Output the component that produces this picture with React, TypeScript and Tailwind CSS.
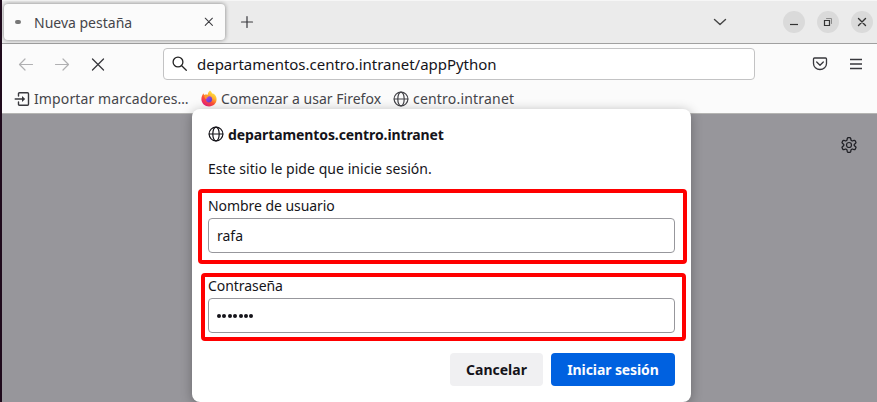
import type { ReactNode } from "react";

function Icon({ children, className = "", size = 16 }: { children: ReactNode; className?: string; size?: number }) {
  return (
    <svg width={size} height={size} viewBox="0 0 16 16" fill="none" stroke="currentColor" strokeWidth="1.2" strokeLinecap="round" strokeLinejoin="round" className={`block shrink-0 ${className}`}>
      {children}
    </svg>
  );
}

function Globe({ className = "" }: { className?: string }) {
  return (
    <Icon className={className}>
      <circle cx="8" cy="8" r="6.9" />
      <ellipse cx="8" cy="8" rx="3.2" ry="6.9" />
      <path d="M1.2 8h13.6" />
    </Icon>
  );
}

function Firefox() {
  return (
    <svg width="16" height="17" viewBox="0 0 16 17" className="block shrink-0">
      <defs>
        <linearGradient id="flame" x1="0.85" y1="0.05" x2="0.25" y2="0.95">
          <stop offset="0" stopColor="#fff44f" />
          <stop offset=".35" stopColor="#ffb52e" />
          <stop offset=".65" stopColor="#ff5036" />
          <stop offset="1" stopColor="#e81f7b" />
        </linearGradient>
        <linearGradient id="orb" x1="0" y1="0" x2="1" y2="1">
          <stop offset="0" stopColor="#a84be8" />
          <stop offset="1" stopColor="#5b38c9" />
        </linearGradient>
      </defs>
      <path d="M9 .4c1.2 1.1 1.8 2 2.2 3.2.9-.2 1.6.1 2.1.7 1.4 1.4 2.3 3 2.3 5 0 4.2-3.3 7.1-7.5 7.1S.4 13.3.4 9.2c0-2.5.9-4.3 2.1-6 .1.8.3 1.3.8 1.7 1.1-.5 2.4-.4 3.500-.1C6.800 3 7.500 1.500 9 .4Z" fill="url(#flame)" />
      <circle cx="8" cy="9.3" r="3.1" fill="url(#orb)" />
      <path d="M3.300 5.300c1.800-.6 3.500-.1 4.300.9-.3 1-1.500 1.100-1.900 1.400-.4.4-.2 1 .1 1.400-1.300.2-2.400-.7-2.500-3.700Z" fill="#ff9a2d" />
    </svg>
  );
}

function WindowButton({ children }: { children: ReactNode }) {
  return <div className="flex size-[22px] items-center justify-center rounded-full bg-[#dadada] text-[#333]">{children}</div>;
}

function TabBar() {
  return (
    <div className="flex h-11 shrink-0 items-center border-b border-[#a0a0a0] border-t border-t-[#f6f6f6] bg-[#ebebeb] pl-0.5 pr-1">
      <div className="flex h-9 w-[221px] items-center rounded bg-[#fbfbfb] pl-[11px] pr-2.5 text-[#45454a] shadow-[0_0_4px_rgba(0,0,0,.45)]">
        <div className="h-1 w-1.5 rounded-full bg-[#777]" />
        <span className="ml-[13px] text-[14px]">Nueva pestaña</span>
        <Icon size={14} className="ml-auto -mr-px text-[#3c3c40]"><path d="m3.700 3.700 8.200 8.200m0-8.200-8.200 8.200" /></Icon>
      </div>
      <Icon className="ml-[14px] text-[#38383d]"><path d="M8 2.500v11M2.500 8h11" /></Icon>
      <Icon className="ml-auto mr-[55px] text-[#444]"><path d="m2.500 5.500 5.500 5 5.500-5" strokeWidth="1.400" /></Icon>
      <div className="flex gap-3">
        <WindowButton><Icon><path d="M4 10.500h8" strokeLinecap="butt" /></Icon></WindowButton>
        <WindowButton>
          <Icon><path d="M4.500 6.500h5v5h-5Z" strokeLinejoin="miter" /><path d="M6.500 4.500h5v5" stroke="#8b8b8b" strokeWidth="1" strokeLinejoin="miter" /></Icon>
        </WindowButton>
        <WindowButton><Icon><path d="m4.500 4.500 7 7m0-7-7 7" strokeWidth="1.400" /></Icon></WindowButton>
      </div>
    </div>
  );
}

function Toolbar() {
  return (
    <div className="flex h-10 shrink-0 items-center pl-4 pr-[13px] text-[#38383d]">
      <Icon className="text-[#b0b0b2]"><path d="M14.500 8.500h-13M7 3 1.500 8.500 7 14" /></Icon>
      <Icon className="ml-5 text-[#b0b0b2]"><path d="M1.500 8.500h13M9 3l5.500 5.500L9 14" /></Icon>
      <Icon className="ml-5"><path d="m2.500 3 11 11m0-11-11 11" strokeWidth="1.300" /></Icon>
      <div className="ml-[57px] flex h-8 w-[592px] items-center rounded border border-[#c3c3c4] bg-white pl-2">
        <Icon className="text-[#222]"><circle cx="6" cy="6" r="4.900" strokeWidth="1.300" /><path d="m9.700 9.700 4.600 4.600" strokeWidth="1.300" /></Icon>
        <span className="ml-[9px] text-[15px] tracking-[-0.02px] text-[#15141a]">departamentos.centro.intranet/appPython</span>
      </div>
      <Icon className="ml-auto"><path d="M2.500 2h11c.6 0 1 .4 1 1v4.500a6.500 6 0 0 1-13 0V3c0-.6.400-1 1-1Z" strokeWidth="1.300" /><path d="m4.700 6 3.300 3.200L11.300 6" strokeWidth="1.300" /></Icon>
      <Icon className="ml-5"><path d="M2 3.500h12M2 8h12M2 12.500h12" strokeLinecap="butt" strokeWidth="1.300" /></Icon>
    </div>
  );
}

function Bookmarks() {
  return (
    <div className="flex h-[29px] shrink-0 items-center pl-3 text-[14px] text-[#45454a]">
      <Icon className="text-[#38383d]"><path d="M4.500 5V2.800c0-.7.300-1 1-1h8c.7 0 1 .3 1 1v10.400c0 .7-.3 1-1 1h-8c-.7 0-1-.3-1-1V11" strokeWidth="1.400" /><path d="M1.200 8H9" strokeWidth="1.400" /><path d="m8 5 3.200 3L8 11Z" fill="currentColor" stroke="none" /></Icon>
      <span className="ml-1 w-[167px] tracking-[0.12px]">Importar marcadores…</span>
      <Firefox />
      <span className="ml-1 w-[172px] tracking-[0.02px]">Comenzar a usar Firefox</span>
      <Globe />
      <span className="ml-1 tracking-[0.2px]">centro.intranet</span>
    </div>
  );
}

function Field({ label, children }: { label: string; children: ReactNode }) {
  return (
    <div className="h-20">
      <div className="h-[22px] text-[14px] leading-[22px] tracking-[-0.06px]">{label}</div>
      <div className="mt-px flex h-[35px] items-center rounded border border-[#97979c] bg-white pl-2 text-[14px]">{children}</div>
    </div>
  );
}

function LoginDialog() {
  return (
    <div className="absolute left-[192px] top-[109px] h-[293px] w-[499px] rounded-lg bg-white px-4 text-[14px] text-[#15141a] shadow-[0_2px_12px_rgba(0,0,0,.3)]">
      <div className="mt-4 flex h-[18px] items-center">
        <Globe />
        <span className="ml-1 font-bold tracking-[-0.1px]">departamentos.centro.intranet</span>
      </div>
      <p className="mt-[15px] h-[22px] leading-[22px] tracking-[0.05px]">Este sitio le pide que inicie sesión.</p>
      <div className="mt-[15px]">
        <Field label="Nombre de usuario">rafa</Field>
        <Field label="Contraseña">
          <div className="flex gap-[1.4px]" aria-label="Contraseña">
            {Array.from({ length: 7 }, (_, i) => <i key={i} className="size-1 rounded-full bg-[#15141a]" />)}
          </div>
        </Field>
      </div>
      <div className="-mt-2 flex justify-end gap-2 pt-[6px] font-bold">
        <button className="h-[33px] w-[93px] rounded bg-[#f0f0f2]">Cancelar</button>
        <button className="h-[33px] w-[124px] rounded bg-[#0061e0] tracking-[-0.1px] text-[#fbfbfe]">Iniciar sesión</button>
      </div>
    </div>
  );
}

export default function App() {
  return (
    <div className="relative flex h-[402px] w-[877px] flex-col overflow-hidden border-l-2 border-[#1f0a1c] bg-[#fbfbfb] font-['Noto_Sans','Open_Sans',sans-serif]">
      <TabBar />
      <Toolbar />
      <Bookmarks />
      <main className="flex flex-1 justify-end border-t border-[#b5b5b3] bg-[#97969b] pr-5 pt-[23px] text-[#202026]">
        <Icon><circle cx="8" cy="8" r="2.500" strokeWidth="1.200" /><path d="M6.300 1.500Q6.500.7 7.300.7h1.400q.8 0 1 .8l.4 1.800 1.100.7 1.900-.6q.7-.2 1.100.5l.6 1.100q.4.7-.2 1.200L13.200 7.400v1.200l1.400 1.200q.6.500.2 1.200l-.6 1.100q-.4.7-1.100.5l-1.900-.6-1.100.7-.4 1.800q-.2.8-1 .8H7.300q-.8 0-1-.8l-.4-1.800L4.800 12l-1.900.6q-.7.2-1.100-.5L1.200 11q-.4-.7.2-1.200L2.800 8.600V7.400L1.400 6.200Q.8 5.700 1.200 5l.6-1.100q.4-.7 1.100-.5l1.900.6 1.100-.7Z" strokeWidth="1.300" /></Icon>
      </main>
      <div className="absolute inset-y-0 -left-0.5 w-[877px]">
        <LoginDialog />
        <div className="absolute left-[198px] top-[189px] h-[75px] w-[489px] rounded-sm border-4 border-[#ff0000]" />
        <div className="absolute left-[201px] top-[273px] h-[68px] w-[485px] rounded-sm border-4 border-[#ff0000]" />
      </div>
    </div>
  );
}
